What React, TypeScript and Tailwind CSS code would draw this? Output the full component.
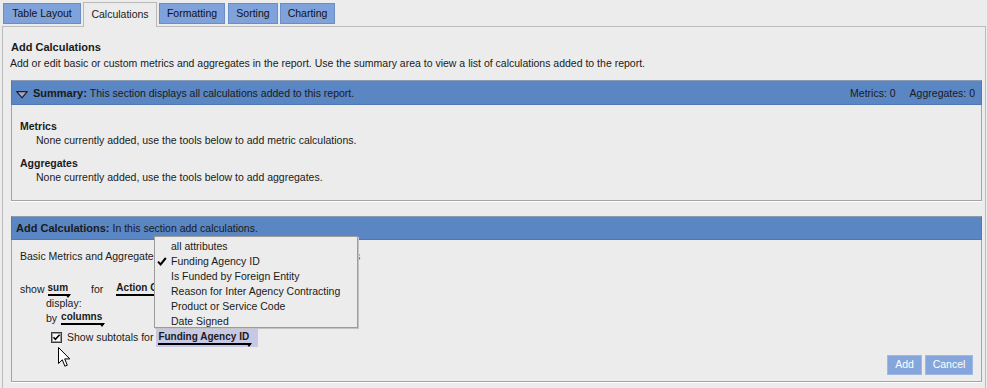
import React from "react";

function Drop({ children, className = "" }: { children: React.ReactNode; className?: string }) {
  return (
    <span className={"relative inline-block font-bold text-[10px] leading-[12px] border-b-2 border-black pr-[2px] " + className}>
      {children}
      <span className="absolute right-[-1px] top-full w-0 h-0 border-l-[3px] border-r-[3px] border-t-[4px] border-l-transparent border-r-transparent border-t-black" />
    </span>
  );
}

export default function App() {
  const items = [
    "all attributes",
    "Funding Agency ID",
    "Is Funded by Foreign Entity",
    "Reason for Inter Agency Contracting",
    "Product or Service Code",
    "Date Signed",
  ];
  const tabCls = "mt-[1px] h-[21px] flex items-center justify-center bg-[#7ea2d9] border border-[#6a8dc6] text-[10.5px] text-[#111] whitespace-nowrap";
  return (
    <div className="relative w-[987px] h-[388px] overflow-hidden bg-[#ececec] font-['Liberation_Sans',Arial,sans-serif] text-[10.5px] text-[#1a1a1a]">
      {/* Tabs */}
      <div className="relative z-10 flex items-start gap-[2px] pl-[3px] pt-[2px] h-[26px]">
        <div className={tabCls + " w-[78px]"}>Table Layout</div>
        <div className="w-[74px] h-[25px] flex items-center justify-center bg-[#ececec] border-t border-l border-r border-[#b9b9b9] text-[10.5px] whitespace-nowrap">
          Calculations
        </div>
        <div className={tabCls + " w-[66px]"}>Formatting</div>
        <div className={tabCls + " w-[50px] ml-[1px]"}>Sorting</div>
        <div className={tabCls + " w-[55px]"}>Charting</div>
      </div>

      {/* Panel */}
      <div className="ml-[2px] w-[984px] h-[362px] border-t border-l border-r border-[#bcbcbc] bg-[#ececec]">
        <div className="pl-[8px] mt-[13px] h-[14px] leading-[14px] text-[11px] font-bold">Add Calculations</div>
        <div className="pl-[7px] mt-[2px] h-[14px] leading-[14px]">
          Add or edit basic or custom metrics and aggregates in the report. Use the summary area to view a list of calculations added to the report.
        </div>

        {/* Summary box */}
        <div className="ml-[8px] mt-[10px] w-[971px] shadow-[0_1px_0_#ffffff]">
          <div className="h-[25px] bg-[#5a86c3] border border-[#4f79b4] border-t-[#8a9bb3] flex items-center pt-[2px] pl-[4px] pr-[6px]">
            <svg width="12" height="8" viewBox="0 0 12 8" className="mr-[5px] mt-[2px]">
              <polygon points="0.7,0.7 11.3,0.7 6,6.8" fill="#a6a3c4" stroke="#1e1e2a" strokeWidth="1.2" strokeLinejoin="round" />
            </svg>
            <span className="font-bold text-[11px] mr-[3px]">Summary:</span>
            <span>This section displays all calculations added to this report.</span>
            <span className="ml-auto">Metrics: 0</span>
            <span className="ml-[14px]">Aggregates: 0</span>
          </div>
          <div className="border-l border-r border-b border-[#a3a3a3] pl-[8px] pt-[14px] pb-[16px]">
            <div className="h-[14px] leading-[14px] font-bold">Metrics</div>
            <div className="h-[14px] leading-[14px] pl-[16px]">None currently added, use the tools below to add metric calculations.</div>
            <div className="mt-[9px] h-[14px] leading-[14px] font-bold">Aggregates</div>
            <div className="h-[14px] leading-[14px] pl-[16px]">None currently added, use the tools below to add aggregates.</div>
          </div>
        </div>

        {/* Add Calculations box */}
        <div className="ml-[8px] mt-[15px] w-[971px] shadow-[0_1px_0_#ffffff]">
          <div className="h-[24px] bg-[#5a86c3] border border-[#4f79b4] border-t-[#8a9bb3] flex items-center pl-[4px] pt-[1px]">
            <span className="font-bold text-[11px] mr-[3px]">Add Calculations:</span>
            <span>In this section add calculations.</span>
          </div>
          <div className="border-l border-r border-b border-[#a3a3a3] pl-[8px] pr-[8px] pt-[9px] pb-[6px]">
            <div className="h-[14px] leading-[14px] flex">
              <span>Basic Metrics and Aggregates</span>
              <span className="ml-[52px] text-[#2f55b0]">Custom Metrics and Aggregates</span>
            </div>
            <div className="mt-[19px] h-[14px] leading-[14px] flex items-start">
              <span>show</span>
              <Drop className="ml-[3px]">sum</Drop>
              <span className="ml-[21px]">for</span>
              <Drop className="ml-[13px]">Action Obligation</Drop>
            </div>
            <div className="h-[14px] leading-[14px] pl-[26px]">display:</div>
            <div className="mt-[1px] h-[14px] leading-[14px] pl-[26px] flex items-start">
              <span>by</span>
              <Drop className="ml-[4px]">columns</Drop>
            </div>
            <div className="mt-[3px] h-[19px] flex items-center">
              <svg width="11" height="11" viewBox="0 0 11 11" className="ml-[31px]">
                <rect x="0.5" y="0.5" width="10" height="10" fill="#ffffff" stroke="#3a3a3a" />
                <rect x="1.5" y="1.5" width="8" height="8" fill="none" stroke="#9a9a9a" />
                <path d="M2.5 5.2 L4.4 7.3 L8.6 2.8" fill="none" stroke="#000" strokeWidth="1.6" />
              </svg>
              <span className="ml-[5px]">Show subtotals for</span>
              <span className="ml-[3px] h-[19px] w-[102px] bg-[#c7c8e3] flex items-center pl-[2px]">
                <Drop>Funding Agency ID</Drop>
              </span>
            </div>
            <div className="mt-[8px] h-[20px] flex justify-end gap-[3px]">
              <button className="h-[20px] w-[35px] bg-[#84a6dc] border border-[#9fb9e4] text-white text-[10.5px]">Add</button>
              <button className="h-[20px] w-[48px] bg-[#84a6dc] border border-[#9fb9e4] text-white text-[10.5px]">Cancel</button>
            </div>
          </div>
        </div>
      </div>

      {/* Dropdown menu */}
      <div className="absolute left-[154px] top-[236px] w-[204px] h-[92px] bg-[#ececec] border border-[#9c9c9c] shadow-[1px_1px_0_#c4c4c4] pt-[2px]">
        {items.map((it, i) => (
          <div key={it} className="relative h-[15px] leading-[15px] pl-[16px]">
            {i === 1 && (
              <svg width="10" height="9" viewBox="0 0 10 9" className="absolute left-[2px] top-[3px]">
                <path d="M1 4.6 L3.6 7.4 L8.8 1" fill="none" stroke="#000" strokeWidth="2" />
              </svg>
            )}
            {it}
          </div>
        ))}
      </div>

      {/* Cursor */}
      <svg width="13" height="21" viewBox="0 0 13 21" className="absolute left-[58px] top-[347px]">
        <path d="M0.5 0.5 L0.5 16.5 L4.3 12.8 L6.9 19.2 L9.3 18.2 L6.7 11.9 L11.8 11.9 Z" fill="#ffffff" stroke="#000" strokeWidth="1" strokeLinejoin="miter" />
      </svg>
    </div>
  );
}
